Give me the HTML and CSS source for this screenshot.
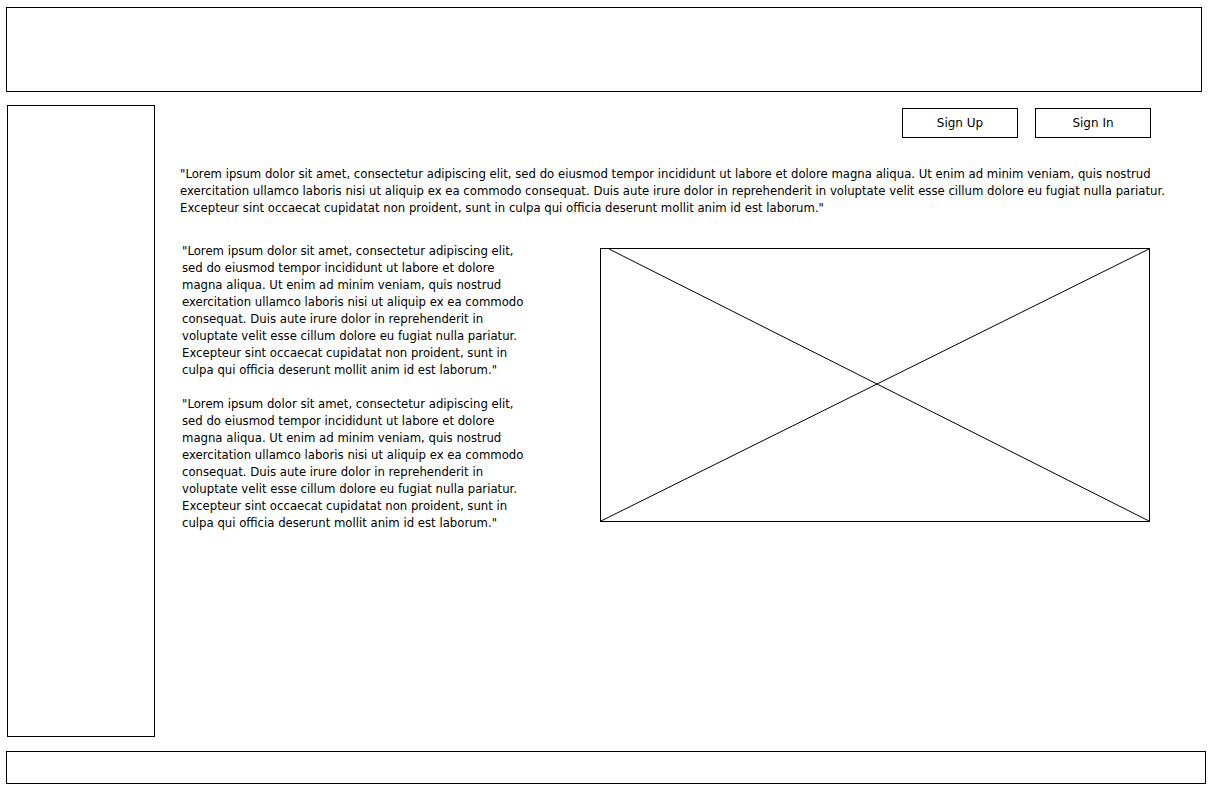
FILE: index.html
```html
<!DOCTYPE html>
<html lang="en">
<head>
    <meta charset="UTF-8">
    <title>Wireframe</title>
    <link rel="stylesheet" href="styles.css">
</head>
<body>
    <!-- Header -->
    <header class="top-bar"></header>

    <div class="main-row">
        <!-- Sidebar -->
        <aside class="sidebar"></aside>

        <!-- Content -->
        <main class="content">
            <div class="auth-buttons">
                <button class="auth-btn">Sign Up</button>
                <button class="auth-btn">Sign In</button>
            </div>

            <p class="intro">"Lorem ipsum dolor sit amet, consectetur adipiscing elit, sed do eiusmod tempor incididunt ut labore et dolore magna aliqua. Ut enim ad minim veniam, quis nostrud exercitation ullamco laboris nisi ut aliquip ex ea commodo consequat. Duis aute irure dolor in reprehenderit in voluptate velit esse cillum dolore eu fugiat nulla pariatur. Excepteur sint occaecat cupidatat non proident, sunt in culpa qui officia deserunt mollit anim id est laborum."</p>

            <div class="split">
                <div class="text-col">
                    <p>"Lorem ipsum dolor sit amet, consectetur adipiscing elit, sed do eiusmod tempor incididunt ut labore et dolore magna aliqua. Ut enim ad minim veniam, quis nostrud exercitation ullamco laboris nisi ut aliquip ex ea commodo consequat. Duis aute irure dolor in reprehenderit in voluptate velit esse cillum dolore eu fugiat nulla pariatur. Excepteur sint occaecat cupidatat non proident, sunt in culpa qui officia deserunt mollit anim id est laborum."</p>
                    <p>"Lorem ipsum dolor sit amet, consectetur adipiscing elit, sed do eiusmod tempor incididunt ut labore et dolore magna aliqua. Ut enim ad minim veniam, quis nostrud exercitation ullamco laboris nisi ut aliquip ex ea commodo consequat. Duis aute irure dolor in reprehenderit in voluptate velit esse cillum dolore eu fugiat nulla pariatur. Excepteur sint occaecat cupidatat non proident, sunt in culpa qui officia deserunt mollit anim id est laborum."</p>
                </div>

                <!-- Image placeholder -->
                <div class="image-box">
                    <svg viewBox="0 0 548 272" preserveAspectRatio="none">
                        <line x1="8" y1="0" x2="548" y2="272" />
                        <line x1="0" y1="272" x2="548" y2="0" />
                    </svg>
                </div>
            </div>
        </main>
    </div>

    <!-- Footer -->
    <footer class="bottom-bar"></footer>
</body>
</html>
```

FILE: styles.css
```css
* {
    margin: 0;
    padding: 0;
    box-sizing: border-box;
}

body {
    background: #ffffff;
    color: #000000;
    font-family: 'DejaVu Sans', sans-serif;
    font-size: 11.7px;
    line-height: 17px;
    width: 1216px;
}

/* Header */
.top-bar {
    margin: 7px 0 0 6px;
    width: 1196px;
    height: 85px;
    border: 1px solid #000;
}

/* Main row */
.main-row {
    display: flex;
    margin-top: 13px;
}

.sidebar {
    margin-left: 7px;
    width: 148px;
    height: 632px;
    border: 1px solid #000;
    flex-shrink: 0;
}

.content {
    flex: 1;
    padding: 3px 0 0 25px;
}

/* Sign up / in */
.auth-buttons {
    display: flex;
    justify-content: flex-end;
    gap: 17px;
    padding-right: 65px;
}

.auth-btn {
    width: 116px;
    height: 30px;
    background: #fff;
    border: 1px solid #000;
    font-family: inherit;
    font-size: 12px;
    color: #000;
}

.intro {
    margin-top: 28px;
    padding-right: 30px;
}

/* Lower split */
.split {
    display: flex;
    margin-top: 25px;
}

.text-col {
    width: 348px;
    margin-left: 2px;
    padding-top: 1px;
}

.text-col p + p {
    margin-top: 17px;
}

.image-box {
    margin: 6px 0 0 70px;
    width: 550px;
    height: 274px;
    border: 1px solid #000;
}

.image-box svg {
    display: block;
    width: 100%;
    height: 100%;
}

.image-box line {
    stroke: #000;
    stroke-width: 1;
    vector-effect: non-scaling-stroke;
}

/* Footer */
.bottom-bar {
    margin: 14px 0 0 6px;
    width: 1200px;
    height: 33px;
    border: 1px solid #000;
}
```
